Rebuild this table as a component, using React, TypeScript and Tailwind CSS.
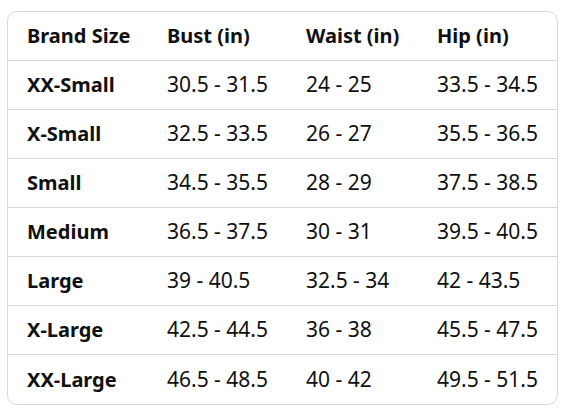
const headers = ['Brand Size', 'Bust (in)', 'Waist (in)', 'Hip (in)']

const rows = [
  ['XX-Small', '30.5 - 31.5', '24 - 25', '33.5 - 34.5'],
  ['X-Small', '32.5 - 33.5', '26 - 27', '35.5 - 36.5'],
  ['Small', '34.5 - 35.5', '28 - 29', '37.5 - 38.5'],
  ['Medium', '36.5 - 37.5', '30 - 31', '39.5 - 40.5'],
  ['Large', '39 - 40.5', '32.5 - 34', '42 - 43.5'],
  ['X-Large', '42.5 - 44.5', '36 - 38', '45.5 - 47.5'],
  ['XX-Large', '46.5 - 48.5', '40 - 42', '49.5 - 51.5'],
]

const colWidths = ['w-[140px]', 'w-[139px]', 'w-[131px]', 'flex-1']

export default function App() {
  return (
    <div className="w-[571px] h-[414px] bg-white pt-[11px] pl-[7px] font-['Noto_Sans',sans-serif] text-[#0f1111]">
      <div className="w-[551px] rounded-[10px] border border-[#d5d9d9] overflow-hidden">
        <div className="flex h-[49px] items-center border-b border-[#d5d9d9] text-[20px] font-bold">
          {headers.map((h, i) => (
            <div key={h} className={`${colWidths[i]} pl-[19px]`}>
              {h}
            </div>
          ))}
        </div>
        {rows.map((row, r) => (
          <div
            key={row[0]}
            className={`flex h-[49px] items-center ${
              r < rows.length - 1 ? 'border-b border-[#d5d9d9]' : ''
            }`}
          >
            {row.map((cell, i) => (
              <div
                key={i}
                className={`${colWidths[i]} pl-[19px] ${
                  i === 0 ? 'font-bold text-[20px]' : 'text-[21px]'
                }`}
              >
                {cell}
              </div>
            ))}
          </div>
        ))}
      </div>
    </div>
  )
}
